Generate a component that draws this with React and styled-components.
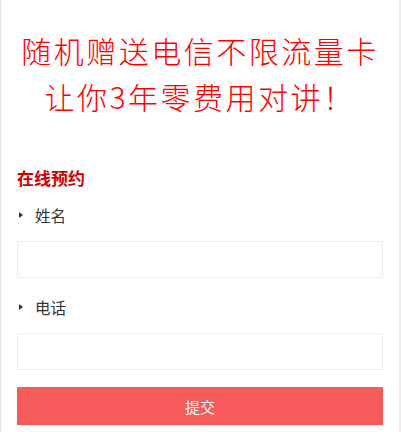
import React from 'react';
import styled, { createGlobalStyle } from 'styled-components';

const GlobalStyle = createGlobalStyle`
  body {
    margin: 0;
    background: #fff;
    font-family: "Liberation Serif", "Noto Sans CJK SC", serif;
  }
`;

export default function App() {
  return (
    <>
      <GlobalStyle />
      <Page>
        <Banner>
          <BannerLine>随机赠送电信不限流量卡</BannerLine>
          <BannerLine>让你3年零费用对讲！</BannerLine>
        </Banner>
        <Form onSubmit={(e) => e.preventDefault()}>
          <FormTitle>在线预约</FormTitle>
          <Field>
            <Label><Arrow />姓名</Label>
            <Input type="text" />
          </Field>
          <Field>
            <Label><Arrow />电话</Label>
            <Input type="tel" />
          </Field>
          <Submit type="submit">提交</Submit>
        </Form>
      </Page>
    </>
  );
}

const Page = styled.div`
  width: 401px;
  height: 432px;
  box-sizing: border-box;
  border-left: 1px solid #e2e2e2;
  border-right: 2px solid #eeeeee;
  overflow: hidden;
`;

const Banner = styled.div`
  padding-top: 27px;
  text-align: center;
`;

const BannerLine = styled.div`
  font-family: "Noto Sans CJK SC", sans-serif;
  font-weight: 300;
  font-size: 30px;
  letter-spacing: 2.5px;
  line-height: 46px;
  color: #ff0000;
`;

const Form = styled.form`
  display: flex;
  flex-direction: column;
  padding: 48px 16px 0;
`;

const FormTitle = styled.h3`
  margin: 0 0 14px;
  font-family: "Noto Sans CJK SC", sans-serif;
  font-size: 17px;
  font-weight: 700;
  line-height: 22px;
  color: #d40000;
`;

const Field = styled.div`
  display: flex;
  flex-direction: column;
  margin-bottom: 17px;
`;

const Label = styled.label`
  display: flex;
  align-items: center;
  height: 24px;
  margin-bottom: 14px;
  font-family: "Noto Sans CJK SC", sans-serif;
  font-size: 15.5px;
  color: #333;
`;

const Arrow = styled.span`
  width: 0;
  height: 0;
  margin: 0 12px 0 2px;
  border-top: 3.5px solid transparent;
  border-bottom: 3.5px solid transparent;
  border-left: 4px solid #333;
`;

const Input = styled.input`
  height: 37px;
  box-sizing: border-box;
  border: 1px solid #eeeeee;
  outline: none;
  padding: 0 10px;
  font-size: 14px;
`;

const Submit = styled.button`
  height: 38px;
  border: none;
  background: #f75b5b;
  color: #fff;
  font-family: "Noto Sans CJK SC", sans-serif;
  font-size: 15px;
  cursor: pointer;
`;
